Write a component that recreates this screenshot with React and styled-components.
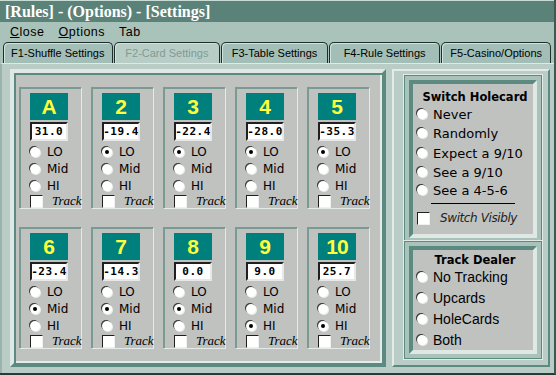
import styled, { createGlobalStyle } from "styled-components";

const Global = createGlobalStyle`
  html, body { margin: 0; padding: 0; background: #a9c2ba; }
`;

const Window = styled.div`
  width: 556px;
  height: 375px;
  display: flex;
  flex-direction: column;
  background: #a9c2ba;
  box-sizing: border-box;
  border-right: 2px solid #3c5a54;
  border-bottom: 2px solid #2a3a36;
  overflow: hidden;
`;

const TitleBar = styled.div`
  height: 22px;
  background: #5b8279;
  border-top: 1px solid #c8dcd6;
  color: #ffffff;
  font: bold 16px "Liberation Serif", serif;
  line-height: 21px;
  padding-left: 5px;
  box-sizing: border-box;
`;

const MenuBar = styled.div`
  height: 20px;
  display: flex;
  align-items: center;
  padding-left: 10px;
  gap: 14px;
  font: 12.5px "Liberation Sans", sans-serif;
  letter-spacing: 0.5px;
  color: #000;
`;

const MenuItem = styled.span`
  & u { text-decoration: underline; }
`;

const TabRow = styled.div`
  height: 21px;
  display: flex;
  padding: 0 3px;
  gap: 1px;
`;

const Tab = styled.div`
  width: ${p => p.w}px;
  box-sizing: border-box;
  border: 1px solid #1e2e2a;
  border-bottom: none;
  border-radius: 5px 5px 0 0;
  background: ${p => (p.active ? "#b9cdc7" : "#a3beb6")};
  color: ${p => (p.active ? "#7e9c95" : "#000")};
  font: 11px "Liberation Sans", sans-serif;
  display: flex;
  align-items: center;
  justify-content: center;
  box-shadow: inset 1px 1px 0 #d2e2dd;
`;

const Body = styled.div`
  flex: 1;
  display: flex;
  gap: 6px;
  padding: 5px 4px 6px 8px;
  background: #b9ccc6;
  border-top: 1px solid #dfe9e6;
  border-left: 2px solid #9ab3ac;
`;

const CardPanel = styled.div`
  width: 376px;
  box-sizing: border-box;
  background: #c0c2c0;
  border: 4px solid;
  border-color: #dfe8e5 #5d8a80 #5d8a80 #dfe8e5;
  box-shadow: inset 2px 2px 0 #5d8a80, inset -2px -2px 0 #e4ece9;
  padding: 14px 10px 8px 5px;
  display: grid;
  grid-template-columns: repeat(5, 63px);
  column-gap: 9px;
  row-gap: 18px;
  align-content: start;
`;

const Card = styled.div`
  height: 122px;
  box-sizing: border-box;
  border: 1px solid;
  border-color: #7a9a94 #e2ebe8 #e2ebe8 #7a9a94;
  box-shadow: 1px 1px 0 #7a9a94 inset;
  padding: 5px 0 0 10px;
  display: flex;
  flex-direction: column;
`;

const Face = styled.div`
  width: 38px;
  height: 27px;
  background: #00807c;
  color: #ffff3c;
  font: bold 21px "Liberation Sans", sans-serif;
  display: flex;
  align-items: center;
  justify-content: center;
  letter-spacing: ${p => (p.wide ? "-1px" : "0")};
`;

const Value = styled.div`
  width: 38px;
  height: 19px;
  margin-top: 2px;
  box-sizing: border-box;
  background: #fff;
  border: 2px solid;
  border-color: #202020 #e8e8e8 #e8e8e8 #202020;
  font: bold 11px "DejaVu Sans Mono", monospace;
  letter-spacing: 0.5px;
  display: flex;
  align-items: center;
  justify-content: center;
`;

const Options = styled.div`
  display: flex;
  flex-direction: column;
  margin-top: 3px;
`;

const Row = styled.div`
  height: ${p => p.h || 16}px;
  display: flex;
  align-items: center;
  gap: ${p => p.gap || 7}px;
  font: ${p => p.font || `12px "DejaVu Sans", sans-serif`};
  color: #000;
  white-space: nowrap;
`;

const Radio = styled.span`
  width: 10px;
  height: 10px;
  flex: none;
  border-radius: 50%;
  background: #fff;
  box-shadow: -1px -1px 0 #3a3a3a, 1px 1px 0 #efefef;
  position: relative;
  &::after {
    content: "";
    display: ${p => (p.on ? "block" : "none")};
    position: absolute;
    left: 3px;
    top: 3px;
    width: 4px;
    height: 4px;
    border-radius: 50%;
    background: #000;
  }
`;

const Check = styled.span`
  width: 11px;
  height: 11px;
  flex: none;
  background: #fff;
  border: 1px solid;
  border-color: #202020 #f0f0f0 #f0f0f0 #202020;
`;

const TrackLabel = styled.span`
  font: italic 13px "Liberation Serif", serif;
  color: #000;
`;

const SideCol = styled.div`
  flex: 1;
  box-sizing: border-box;
  display: flex;
  flex-direction: column;
  gap: 8px;
  padding: 9px 11px 0 15px;
  border: 2px solid;
  border-color: #e2ebe8 #5d8a80 #5d8a80 #e2ebe8;
`;

const SidePanel = styled.div`
  height: ${p => p.h}px;
  box-sizing: border-box;
  background: #c0c2c0;
  border: 4px solid;
  border-color: #5d8a80 #dfe8e5 #dfe8e5 #5d8a80;
  box-shadow: 0 0 0 4px #a9c2ba, 0 0 0 5px #5d8a80, 0 0 0 6px #e2ebe8;
  padding: ${p => p.pad};
  display: flex;
  flex-direction: column;
`;

const SideTitle = styled.div`
  font: bold 11.5px "DejaVu Sans", sans-serif;
  text-align: center;
  margin-bottom: ${p => p.mb || 0}px;
`;

const Divider = styled.div`
  height: 1px;
  background: #000;
  margin: 4px 18px 6px 14px;
`;

const Visibly = styled.span`
  font: italic 12px "DejaVu Sans", sans-serif;
  color: #222;
  letter-spacing: -0.4px;
`;

const cards = [
  { face: "A", val: "31.0", sel: -1 },
  { face: "2", val: "-19.4", sel: 0 },
  { face: "3", val: "-22.4", sel: 0 },
  { face: "4", val: "-28.0", sel: 0 },
  { face: "5", val: "-35.3", sel: 0 },
  { face: "6", val: "-23.4", sel: 1 },
  { face: "7", val: "-14.3", sel: 1 },
  { face: "8", val: "0.0", sel: 1 },
  { face: "9", val: "9.0", sel: 2 },
  { face: "10", val: "25.7", sel: 2 },
];

const tabs = [
  ["F1-Shuffle Settings", 110],
  ["F2-Card Settings", 107],
  ["F3-Table Settings", 107],
  ["F4-Rule Settings", 112],
  ["F5-Casino/Options", 110],
];

const holecard = ["Never", "Randomly", "Expect a 9/10", "See a 9/10", "See a 4-5-6"];
const tracking = ["No Tracking", "Upcards", "HoleCards", "Both"];

export default function App() {
  return (
    <Window>
      <Global />
      <TitleBar>[Rules] - (Options) - [Settings]</TitleBar>
      <MenuBar>
        <MenuItem><u>C</u>lose</MenuItem>
        <MenuItem><u>O</u>ptions</MenuItem>
        <MenuItem>Tab</MenuItem>
      </MenuBar>
      <TabRow>
        {tabs.map(([t, w], i) => (
          <Tab key={t} w={w} active={i === 1}>{t}</Tab>
        ))}
      </TabRow>
      <Body>
        <CardPanel>
          {cards.map(c => (
            <Card key={c.face}>
              <Face wide={c.face.length > 1}>{c.face}</Face>
              <Value>{c.val}</Value>
              <Options>
                {["LO", "Mid", "HI"].map((l, i) => (
                  <Row key={l} h={i === 0 ? 16 : 17}>
                    <Radio on={c.sel === i} />
                    {l}
                  </Row>
                ))}
                <Row h={14} gap={9}>
                  <Check />
                  <TrackLabel>Track</TrackLabel>
                </Row>
              </Options>
            </Card>
          ))}
        </CardPanel>
        <SideCol>
          <SidePanel h={158} pad="6px 0 0 4px">
            <SideTitle mb={1}>Switch Holecard</SideTitle>
            {holecard.map((o, i) => (
              <Row key={o} h={i === 1 || i === 2 ? 20 : 18} gap={6} font={`13px "DejaVu Sans", sans-serif`}>
                <Radio />
                {o}
              </Row>
            ))}
            <Divider />
            <Row h={16} gap={10}>
              <Check />
              <Visibly>Switch Visibly</Visibly>
            </Row>
          </SidePanel>
          <SidePanel h={108} pad="3px 0 0 4px">
            <SideTitle>Track Dealer</SideTitle>
            {tracking.map(o => (
              <Row key={o} h={22} gap={6} font={`14px "Liberation Sans", sans-serif`}>
                <Radio />
                {o}
              </Row>
            ))}
          </SidePanel>
        </SideCol>
      </Body>
    </Window>
  );
}
